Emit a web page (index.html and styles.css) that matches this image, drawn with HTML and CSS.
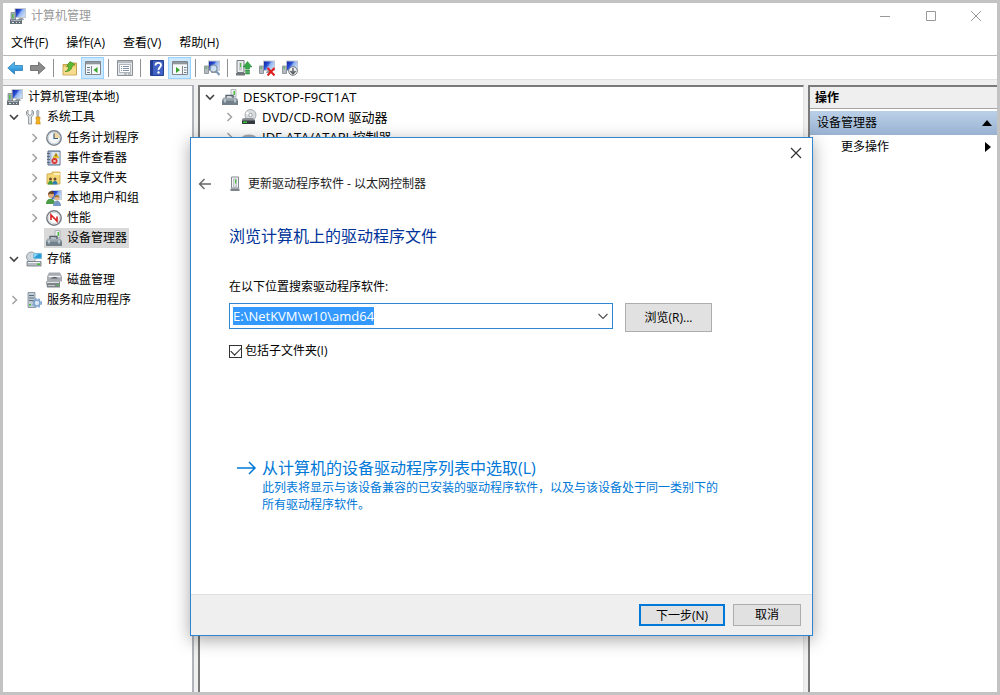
FILE: index.html
```html
<!DOCTYPE html>
<html lang="zh-CN">
<head>
    <meta charset="UTF-8">
    <meta name="viewport" content="width=device-width, initial-scale=1.0">
    <title>计算机管理</title>
    <link rel="stylesheet" href="styles.css">
</head>
<body>
    <!-- icon set -->
    <svg class="sprite" aria-hidden="true">
        <linearGradient id="g-screen" x1="0" y1="0" x2="1" y2="0.6">
            <stop offset="0" stop-color="#0b1fa0"/>
            <stop offset=".45" stop-color="#2f55d8"/>
            <stop offset=".6" stop-color="#8fb2f0"/>
            <stop offset="1" stop-color="#c3d9f8"/>
        </linearGradient>
        <linearGradient id="g-blue" x1="0" y1="0" x2="0" y2="1">
            <stop offset="0" stop-color="#6cc4f2"/>
            <stop offset="1" stop-color="#1583cf"/>
        </linearGradient>
        <symbol id="i-computer" viewBox="0 0 16 16">
            <rect x="4.500" y="0" width="11.500" height="10" fill="#c3c8ce"/>
            <rect x="5.500" y="1" width="9.500" height="8" fill="url(#g-screen)"/>
            <path d="M9 10h4l1 2H8z" fill="#9ba2a9"/>
            <path d="M1 4.500h4.500V12H1z" fill="#a3abb2" stroke="#77818a" stroke-width=".7"/>
            <rect x="2" y="6" width="1.500" height="4" fill="#4fc04a"/>
            <path d="M0 11.500h12V16H0z" fill="#66717a"/>
            <path d="M1 12.500h10" stroke="#aab3ba"/>
            <path d="M2 14.500h2m2 0h1m2 0h1" stroke="#e0e5e8" stroke-width="1.200"/>
        </symbol>
        <symbol id="i-tools" viewBox="0 0 16 16">
            <path d="M2 1v4l2 1.500L6 5V1l1.500 1.500v3L5.500 8v7h-3V8L.5 5.500v-3z" fill="#dfe2e4" stroke="#7f868c" stroke-width=".8"/>
            <path d="M11.500 1l1.500 1-.5 6h-1.500L10.500 2z" fill="#b7bcc0" stroke="#878d92" stroke-width=".5"/>
            <path d="M10 8h4v2l-.5 1 .8 4h-4.500l.7-4-.5-1z" fill="#f2b01e" stroke="#c98a0c" stroke-width=".6"/>
        </symbol>
        <symbol id="i-clock" viewBox="0 0 16 16">
            <circle cx="8" cy="8" r="7.200" fill="#f4f7fa" stroke="#7d868e" stroke-width="1.500"/>
            <path d="M8 8V2a6 6 0 0 1 6 6z" fill="#f4d79a"/>
            <circle cx="8" cy="8" r="5.700" fill="none" stroke="#c5cdd4" stroke-width=".8"/>
            <path d="M8 3.500V8.500h4" fill="none" stroke="#3f5f86" stroke-width="1.200"/>
        </symbol>
        <symbol id="i-event" viewBox="0 0 16 16">
            <path d="M2 1h12v14H2z" fill="#a9bbd3" stroke="#5b6c88"/>
            <path d="M5.500 2h8v12h-8z" fill="#dbe5f2"/>
            <path d="M1 3.500h3m-3 3h3m-3 3h3m-3 3h3" stroke="#5d6a7c"/>
            <path d="M10 3l3 5H7z" fill="#ffd52e" stroke="#b88f00" stroke-width=".5"/>
            <path d="M10 4.500v2" stroke="#222"/>
            <circle cx="8.500" cy="11" r="3" fill="#d8332c"/>
            <path d="M7.300 9.800l2.400 2.400m0-2.400l-2.400 2.400" stroke="#fff" stroke-width=".9"/>
        </symbol>
        <symbol id="i-share" viewBox="0 0 16 16">
            <path d="M1 4l5-.5V2h8v12H1z" fill="#f4d677" stroke="#c9a242" stroke-width=".8"/>
            <path d="M8 3h6v2H8z" fill="#fbeeb9"/>
            <circle cx="4.500" cy="9" r="1.500" fill="#6d4b2a"/>
            <circle cx="9" cy="9" r="1.500" fill="#6d4b2a"/>
            <path d="M2 14.500c0-5 5-5 5 0z" fill="#3f9a3b"/>
            <path d="M6.500 14.500c0-5 5-5 5 0z" fill="#2f7fb5"/>
        </symbol>
        <symbol id="i-users" viewBox="0 0 16 16">
            <rect x="5" y="0" width="11" height="10" fill="#c9cdd2"/>
            <rect x="6" y="1" width="9" height="8" fill="url(#g-screen)"/>
            <circle cx="5" cy="5" r="3" fill="#dba878"/>
            <path d="M2 5c0-5 6-5 6-1-2 0-4-1-6 1z" fill="#6b4423"/>
            <path d="M0 14c0-7 9-7 9 0z" fill="#4a9a48"/>
            <circle cx="11" cy="8" r="2.500" fill="#e2b88c"/>
            <path d="M8.500 8c0-4 5-4 5 0-2-1.500-3-1.500-5 0z" fill="#a6772f"/>
            <path d="M7 16c0-7 8-7 8 0z" fill="#7697c4"/>
        </symbol>
        <symbol id="i-perf" viewBox="0 0 16 16">
            <circle cx="8" cy="8" r="7.200" fill="#fff" stroke="#777d83" stroke-width="1.500"/>
            <circle cx="8" cy="8" r="5.500" fill="none" stroke="#c4c8cc" stroke-width=".8"/>
            <path d="M5 10V5l6 6V6.500" fill="none" stroke="#d81f1f" stroke-width="1.600"/>
        </symbol>
        <symbol id="i-device" viewBox="0 0 16 16">
            <path d="M9 .5h5v7H9z" fill="#e9ecee" stroke="#9aa1a7" stroke-width=".7"/>
            <rect x="11.500" y="2" width="1.500" height="4" fill="#53c03f"/>
            <path d="M1.500 8.500h13L16 11H0z" fill="#9fabb5"/>
            <path d="M4 9V6.500h7V9" fill="none" stroke="#56626c" stroke-width="1.300"/>
            <path d="M0 10.500h16V16H0z" fill="#71808b"/>
            <path d="M0 11h16" stroke="#a9b5be"/>
            <path d="M3 10.500v3m10-3v3" stroke="#e2e7ea" stroke-width="1.200"/>
        </symbol>
        <symbol id="i-storage" viewBox="0 0 16 16">
            <circle cx="5.500" cy="6" r="5" fill="#ccd3d9" stroke="#848d95" stroke-width=".8"/>
            <path d="M7 2h9v6H7z" fill="#2a9bd4" stroke="#e2e7ea" stroke-width=".8"/>
            <path d="M8 3h4L8 7z" fill="#8bd6f4"/>
            <path d="M1 10.500h14V15H1z" fill="#b4bbc1" stroke="#6e777e" stroke-width=".8"/>
            <path d="M2 11.500h12" stroke="#eef1f3"/>
            <rect x="11" y="12.500" width="3" height="1.500" fill="#3fbf3a"/>
        </symbol>
        <symbol id="i-disk" viewBox="0 0 16 16">
            <path d="M3 .5h11l2 4v5H1v-5z" fill="#a5abb0"/>
            <path d="M2.500 4.500h12" stroke="#f0f2f3" stroke-width="1.500"/>
            <path d="M5 6.500c1.500-2 5.500-2 7 0z" fill="#50585f"/>
            <path d="M0 9.500h14v6H1z" fill="#7c848a"/>
            <path d="M1 10.500h12" stroke="#e1e4e6"/>
            <path d="M2 13.500h7" stroke="#c1c7cb"/>
            <rect x="11" y="12.500" width="2" height="1.500" fill="#4cc246"/>
        </symbol>
        <symbol id="i-service" viewBox="0 0 16 16">
            <path d="M2 .5h7v15H2z" fill="#c2ccd4" stroke="#788894" stroke-width=".8"/>
            <path d="M3 3.500h5m-5 2.500h5m-5 2.500h5" stroke="#5b6e7d"/>
            <rect x="3" y="12" width="2" height="1.500" fill="#48ba43"/>
            <circle cx="11" cy="11" r="3" fill="#dce9f5" stroke="#7ba3cd" stroke-width="1.600"/>
            <circle cx="11" cy="11" r="4.400" fill="none" stroke="#7ba3cd" stroke-width="1.200" stroke-dasharray="1.800 1.800"/>
        </symbol>
        <symbol id="i-cdrom" viewBox="0 0 16 16">
            <circle cx="9.500" cy="6" r="5.500" fill="#d9dcdf" stroke="#969ca1" stroke-width=".8"/>
            <path d="M9.500 6L6 2.500 4.500 5z" fill="#fff"/>
            <circle cx="9.500" cy="6" r="1.700" fill="#fff" stroke="#8a9095" stroke-width=".8"/>
            <path d="M1 10l2-1h9l2 2v4H1z" fill="#8a9095"/>
            <path d="M1 11.500h13V15H1z" fill="#343a3f"/>
            <rect x="2" y="12.500" width="4" height="1.500" fill="#39c433"/>
        </symbol>
        <symbol id="i-ide" viewBox="0 0 16 16">
            <ellipse cx="8" cy="10" rx="8" ry="4.500" fill="#a8adb2"/>
        </symbol>
        <symbol id="i-nic" viewBox="0 0 10 16">
            <path d="M1.500 1h7v11h-7z" fill="#f3f4f5" stroke="#858b90"/>
            <path d="M3.500 3h3v8h-3z" fill="#dfe2e4" stroke="#a5abaf" stroke-width=".6"/>
            <rect x="5" y="3.500" width="1.200" height="4" fill="#4fbd3d"/>
            <path d="M.5 12.500h9v2.500h-9z" fill="#7d8489"/>
        </symbol>
        <symbol id="i-back" viewBox="0 0 16 16">
            <path d="M.8 8L7.500 2v3.500h8v5h-8V14z" fill="url(#g-blue)" stroke="#2e7eb5" stroke-width=".8"/>
        </symbol>
        <symbol id="i-forward" viewBox="0 0 16 16">
            <path d="M15.200 8L8.500 2v3.500h-8v5h8V14z" fill="#8c8c8c" stroke="#626262" stroke-width=".8"/>
        </symbol>
        <symbol id="i-folder-up" viewBox="0 0 16 16">
            <path d="M1 4.500h5l1-1.500h7.500v12H1z" fill="#edc766" stroke="#b9923f" stroke-width=".8"/>
            <path d="M1.500 7h12.500v7.500H1.500z" fill="#f6dc8d"/>
            <path d="M3 11.500c2.500-.5 3.500-2 3.500-5H4.500L8 1.500 13 4.500l-2.500.8C10 9.500 7 12 3 11.500z" fill="#5cba35" stroke="#2f8319" stroke-width=".6"/>
        </symbol>
        <symbol id="i-tree-pane" viewBox="0 0 16 16">
            <path d="M.5 1.500h15v13H.5z" fill="#f7f8f9" stroke="#80868b"/>
            <path d="M1 2h14v3H1z" fill="#8f969c"/>
            <path d="M1 4.500h14" stroke="#d8dbdd"/>
            <path d="M6.500 6v8" stroke="#80868b"/>
            <path d="M2 7.500h3m-3 2.500h3m-3 2.500h3" stroke="#687c90"/>
            <path d="M12.500 7v6L8.500 10z" fill="#35a52a"/>
        </symbol>
        <symbol id="i-action-pane" viewBox="0 0 16 16">
            <path d="M.5 1.500h15v13H.5z" fill="#f7f8f9" stroke="#80868b"/>
            <path d="M1 2h14v3H1z" fill="#8f969c"/>
            <path d="M1 4.500h14" stroke="#d8dbdd"/>
            <path d="M10.500 6v8" stroke="#80868b"/>
            <path d="M12 7.500h2.500M12 10h2.500M12 12.500h2.500" stroke="#687c90"/>
            <path d="M4 7v6l4-3z" fill="#35a52a"/>
        </symbol>
        <symbol id="i-props" viewBox="0 0 16 16">
            <path d="M.5.5h15v15H.5z" fill="#e5e8ea" stroke="#8b9196"/>
            <path d="M1 2h14" stroke="#b4babf" stroke-width="2"/>
            <path d="M2.500 4.500h11v8h-11z" fill="#fff" stroke="#a0a6ab" stroke-width=".8"/>
            <path d="M4 6.500h1m1 0h6M4 8.500h1m1 0h6M4 10.500h1m1 0h6" stroke="#8292a3"/>
            <path d="M7 14h3m1 0h3" stroke="#8b9196"/>
        </symbol>
        <symbol id="i-help" viewBox="0 0 16 16">
            <path d="M1.500.5h13v15h-13z" fill="#3f62c4" stroke="#253f92"/>
            <path d="M2 1h2v14H2z" fill="#233d91"/>
            <path d="M6.500 5.500c0-3.500 5.500-3.300 5.500-.2 0 2-2.500 2-2.500 4.700" fill="none" stroke="#fff" stroke-width="1.800"/>
            <circle cx="9.500" cy="12.500" r="1.200" fill="#fff"/>
        </symbol>
        <symbol id="i-pc" viewBox="0 0 16 16">
            <path d="M4 .5h12v10.500H4z" fill="#c3c8ce"/>
            <path d="M5 1.500h10v8.500H5z" fill="url(#g-screen)"/>
            <path d="M8 11h4l1 2H7z" fill="#8f979d"/>
            <path d="M.5 6h4v7.500h-4z" fill="#b3bac0" stroke="#7e868d" stroke-width=".8"/>
            <path d="M1.500 8h1.500" stroke="#45b83f" stroke-width="1.500"/>
        </symbol>
        <symbol id="i-scan" viewBox="0 0 16 16">
            <use href="#i-pc"/>
            <circle cx="9.500" cy="8.500" r="3.500" fill="#d7eaf8" fill-opacity=".8" stroke="#87929b" stroke-width="1.200"/>
            <path d="M12 11l3.500 4" stroke="#7896b5" stroke-width="2"/>
        </symbol>
        <symbol id="i-update" viewBox="0 0 16 16">
            <path d="M1 .5h7v12H1z" fill="#eceeef" stroke="#71787e"/>
            <path d="M3 2.500h3v8H3z" fill="#c5cacd"/>
            <path d="M4.500 3v4" stroke="#4fbd3d"/>
            <path d="M0 13h9v2.500H0z" fill="#6f767b"/>
            <path d="M11.500 1.500L16 7h-2.500v2h-4V7H7zM9.500 10h4v1.500h-4zm0 2.500h4V14h-4z" fill="#37a847" stroke="#1e7b2d" stroke-width=".5"/>
        </symbol>
        <symbol id="i-remove" viewBox="0 0 16 16">
            <use href="#i-pc"/>
            <path d="M8.500 8l7 7.500m0-7.500l-7 7.500" stroke="#e01b1b" stroke-width="2"/>
        </symbol>
        <symbol id="i-disable" viewBox="0 0 16 16">
            <use href="#i-pc"/>
            <circle cx="11" cy="11" r="4.300" fill="#f3f4f5" stroke="#74797e"/>
            <path d="M11 8v5.500M8.500 11l2.500 2.800 2.500-2.800" fill="none" stroke="#5c6166" stroke-width="1.500"/>
        </symbol>
        <symbol id="i-open" viewBox="0 0 14 14">
            <path d="M3 5l4 4 4-4" fill="none" stroke="#404040" stroke-width="1.600"/>
        </symbol>
        <symbol id="i-closed" viewBox="0 0 14 14">
            <path d="M5.500 3l4 4-4 4" fill="none" stroke="#a2a2a2" stroke-width="1.500"/>
        </symbol>
    </svg>

    <div class="window">
        <header class="titlebar">
            <svg class="icon"><use href="#i-computer"/></svg>
            <span class="titlebar-text">计算机管理</span>
            <div class="window-buttons">
                <button type="button" aria-label="最小化"><svg viewBox="0 0 12 12"><path d="M1 6.500h10"/></svg></button>
                <button type="button" aria-label="最大化"><svg viewBox="0 0 12 12"><path d="M1.500 1.500h9v9h-9z"/></svg></button>
                <button type="button" aria-label="关闭"><svg viewBox="0 0 12 12"><path d="M1 1l10 10M11 1L1 11"/></svg></button>
            </div>
        </header>

        <nav class="menubar">
            <button type="button">文件(F)</button>
            <button type="button">操作(A)</button>
            <button type="button">查看(V)</button>
            <button type="button">帮助(H)</button>
        </nav>

        <div class="toolbar">
            <button type="button" aria-label="后退"><svg class="icon"><use href="#i-back"/></svg></button>
            <button type="button" aria-label="前进"><svg class="icon"><use href="#i-forward"/></svg></button>
            <span class="separator"></span>
            <button type="button" aria-label="上一级"><svg class="icon"><use href="#i-folder-up"/></svg></button>
            <button type="button" class="active" aria-label="显示控制台树"><svg class="icon"><use href="#i-tree-pane"/></svg></button>
            <span class="separator"></span>
            <button type="button" aria-label="属性"><svg class="icon"><use href="#i-props"/></svg></button>
            <span class="separator"></span>
            <button type="button" aria-label="帮助"><svg class="icon"><use href="#i-help"/></svg></button>
            <button type="button" class="active" aria-label="显示操作窗格"><svg class="icon"><use href="#i-action-pane"/></svg></button>
            <span class="separator"></span>
            <button type="button" aria-label="扫描硬件改动"><svg class="icon"><use href="#i-scan"/></svg></button>
            <span class="separator"></span>
            <button type="button" aria-label="更新驱动程序"><svg class="icon"><use href="#i-update"/></svg></button>
            <button type="button" aria-label="卸载"><svg class="icon"><use href="#i-remove"/></svg></button>
            <button type="button" aria-label="禁用"><svg class="icon"><use href="#i-disable"/></svg></button>
        </div>

        <main class="panes">
            <section class="pane console-tree">
                <div class="tree-row root"><span class="tree-label"><svg class="icon"><use href="#i-computer"/></svg>计算机管理(本地)</span></div>
                <ul class="tree">
                    <li>
                        <div class="tree-row"><svg class="arrow"><use href="#i-open"/></svg><span class="tree-label"><svg class="icon"><use href="#i-tools"/></svg>系统工具</span></div>
                        <ul>
                            <li class="tree-row"><svg class="arrow"><use href="#i-closed"/></svg><span class="tree-label"><svg class="icon"><use href="#i-clock"/></svg>任务计划程序</span></li>
                            <li class="tree-row"><svg class="arrow"><use href="#i-closed"/></svg><span class="tree-label"><svg class="icon"><use href="#i-event"/></svg>事件查看器</span></li>
                            <li class="tree-row"><svg class="arrow"><use href="#i-closed"/></svg><span class="tree-label"><svg class="icon"><use href="#i-share"/></svg>共享文件夹</span></li>
                            <li class="tree-row"><svg class="arrow"><use href="#i-closed"/></svg><span class="tree-label"><svg class="icon"><use href="#i-users"/></svg>本地用户和组</span></li>
                            <li class="tree-row"><svg class="arrow"><use href="#i-closed"/></svg><span class="tree-label"><svg class="icon"><use href="#i-perf"/></svg>性能</span></li>
                            <li class="tree-row"><svg class="arrow"></svg><span class="tree-label selected"><svg class="icon"><use href="#i-device"/></svg>设备管理器</span></li>
                        </ul>
                    </li>
                    <li>
                        <div class="tree-row"><svg class="arrow"><use href="#i-open"/></svg><span class="tree-label"><svg class="icon"><use href="#i-storage"/></svg>存储</span></div>
                        <ul>
                            <li class="tree-row"><svg class="arrow"></svg><span class="tree-label"><svg class="icon"><use href="#i-disk"/></svg>磁盘管理</span></li>
                        </ul>
                    </li>
                    <li class="tree-row"><svg class="arrow"><use href="#i-closed"/></svg><span class="tree-label"><svg class="icon"><use href="#i-service"/></svg>服务和应用程序</span></li>
                </ul>
            </section>

            <section class="pane device-tree">
                <ul class="tree">
                    <li>
                        <div class="tree-row"><svg class="arrow"><use href="#i-open"/></svg><span class="tree-label"><svg class="icon"><use href="#i-device"/></svg>DESKTOP-F9CT1AT</span></div>
                        <ul>
                            <li class="tree-row"><svg class="arrow"><use href="#i-closed"/></svg><span class="tree-label"><svg class="icon"><use href="#i-cdrom"/></svg>DVD/CD-ROM 驱动器</span></li>
                            <li class="tree-row"><svg class="arrow"><use href="#i-closed"/></svg><span class="tree-label"><svg class="icon"><use href="#i-ide"/></svg>IDE ATA/ATAPI 控制器</span></li>
                        </ul>
                    </li>
                </ul>
            </section>

            <aside class="pane actions">
                <h2 class="actions-title">操作</h2>
                <button type="button" class="actions-group">设备管理器<svg viewBox="0 0 10 10"><path d="M0 8l5-6 5 6z"/></svg></button>
                <button type="button" class="actions-item">更多操作<svg viewBox="0 0 10 10"><path d="M3 0l6 5-6 5z"/></svg></button>
            </aside>
        </main>
    </div>

    <form class="dialog" role="dialog" aria-labelledby="dialog-title">
        <div class="dialog-caption">
            <button type="button" aria-label="关闭"><svg viewBox="0 0 12 12"><path d="M1 1l10 10M11 1L1 11"/></svg></button>
        </div>
        <div class="dialog-title">
            <button type="button" aria-label="返回"><svg viewBox="0 0 14 14"><path d="M13 7H1.500M6.500 2l-5 5 5 5"/></svg></button>
            <svg class="nic"><use href="#i-nic"/></svg>
            <span id="dialog-title">更新驱动程序软件 - 以太网控制器</span>
        </div>
        <div class="dialog-body">
            <h1>浏览计算机上的驱动程序文件</h1>
            <label class="path-label" for="path">在以下位置搜索驱动程序软件:</label>
            <div class="path-row">
                <div class="combo">
                    <input type="text" id="path" value="E:\NetKVM\w10\amd64" spellcheck="false" autocomplete="off">
                    <button type="button" aria-label="展开"><svg viewBox="0 0 12 12"><path d="M1.500 4L6 8.500 10.500 4"/></svg></button>
                </div>
                <button type="button" class="btn browse">浏览(R)...</button>
            </div>
            <div class="check-row">
                <input type="checkbox" id="subfolders" checked>
                <label for="subfolders">包括子文件夹(I)</label>
            </div>
            <a class="pick-link" href="#">
                <svg viewBox="0 0 20 16"><path d="M0 8h18M12 2l6 6-6 6"/></svg>
                <span>
                    <strong>从计算机的设备驱动程序列表中选取(L)</strong>
                    <small>此列表将显示与该设备兼容的已安装的驱动程序软件，以及与该设备处于同一类别下的所有驱动程序软件。</small>
                </span>
            </a>
        </div>
        <div class="dialog-footer">
            <button type="submit" class="btn next">下一步(N)</button>
            <button type="button" class="btn cancel">取消</button>
        </div>
    </form>

    <script>
        // path is preselected so it can be typed over
        const path = document.getElementById('path');
        path.focus();
        path.select();
    </script>
</body>
</html>
```
FILE: styles.css
```css
* {
    box-sizing: border-box;
}
body {
    margin: 0;
    font-family: "Open Sans", "Noto Sans CJK SC", sans-serif;
    font-size: 12px;
    line-height: 20px;
    color: #000;
}
button,
input {
    font: inherit;
    color: inherit;
}
button {
    padding: 0;
    border: 0;
    background: none;
}
ul {
    list-style: none;
    margin: 0;
    padding: 0;
}
.sprite {
    position: absolute;
    width: 0;
    height: 0;
}
.icon {
    width: 16px;
    height: 16px;
    flex: none;
}

/* main window */
.window {
    display: flex;
    flex-direction: column;
    height: 100vh;
    border: 3px solid #c3c3c3;
    background: #efefef;
}
.titlebar {
    display: flex;
    align-items: center;
    height: 26px;
    padding-left: 7px;
    background: #fff;
    color: #999;
}
.titlebar-text {
    margin-left: 5px;
}
.window-buttons {
    display: flex;
    margin-left: auto;
}
.window-buttons button {
    display: flex;
    justify-content: center;
    width: 46px;
}
.window-buttons svg,
.dialog-caption svg {
    width: 12px;
    height: 12px;
    fill: none;
    stroke: #999;
}
.window-buttons button:last-child {
    width: 43px;
}
.menubar {
    display: flex;
    gap: 18px;
    height: 27px;
    padding: 2px 8px 0;
    background: #fff;
    border-bottom: 1px solid #b8b8b8;
}
.toolbar {
    display: flex;
    align-items: center;
    height: 24px;
    padding-top: 1px;
    background: #fff;
    border-bottom: 1px solid #e2e2e2;
}
.toolbar button {
    display: flex;
    align-items: center;
    justify-content: center;
    width: 23px;
    height: 22px;
}
.toolbar .active {
    background: #cce8ff;
    border: 1px solid #99d1ff;
}
.separator {
    width: 1px;
    height: 18px;
    margin: 0 4px;
    background: #8f8f8f;
}

/* panes */
.panes {
    display: flex;
    flex: 1;
    gap: 4px;
    min-height: 0;
    padding-top: 5px;
}
.pane {
    background: #fff;
    overflow: hidden;
}
.console-tree {
    width: 191px;
    border-top: 1px solid #a9adb3;
    border-right: 2px solid #b0b4ba;
    padding-top: 1px;
}
.device-tree {
    flex: 1;
    border-top: 2px solid #7a7a7a;
    border-left: 2px solid #7a7a7a;
    border-right: 1px solid #e2e2e2;
    font-size: 13px;
}
.actions {
    width: 189px;
    border-top: 2px solid #7a7a7a;
    border-left: 2px solid #7a7a7a;
}
.tree {
    padding-left: 4px;
}
.tree ul {
    padding-left: 19px;
}
.console-tree .tree ul {
    padding-top: 1px;
    padding-left: 20px;
}
.console-tree .tree li + li > .tree-row {
    margin-top: 1px;
}
.device-tree .tree {
    padding-left: 3px;
}
.tree-row {
    display: flex;
    gap: 3px;
    align-items: center;
    height: 20px;
    white-space: nowrap;
}
.root {
    padding-left: 2px;
}
.arrow {
    width: 14px;
    height: 14px;
    flex: none;
}
.tree-label {
    display: flex;
    align-items: center;
    gap: 5px;
    padding: 0 2px;
}
.selected {
    background: #d9d9d9;
}
.actions-title {
    margin: 0 0 2px;
    padding: 1px 0 0 5px;
    font-size: 12px;
    line-height: 20px;
    background: #efefef;
    border-bottom: 1px solid #a5a5a5;
}
.actions-group,
.actions-item {
    display: flex;
    align-items: center;
    justify-content: space-between;
    width: 100%;
    height: 24px;
    padding: 0 5px 0 7px;
}
.actions-group {
    background: linear-gradient(#bbd0e8, #99b2d2);
}
.actions-item {
    padding-left: 31px;
}
.actions svg {
    width: 10px;
    height: 10px;
}

/* driver update wizard */
.dialog {
    position: absolute;
    top: 137px;
    right: 187px;
    bottom: 59px;
    left: 190px;
    display: flex;
    flex-direction: column;
    background: #fff;
    border: 1px solid #2f86d0;
    box-shadow: 0 4px 16px rgba(0, 0, 0, 0.35);
}
.dialog-caption {
    display: flex;
    justify-content: flex-end;
    height: 30px;
}
.dialog-caption button {
    display: flex;
    align-items: center;
    justify-content: center;
    width: 32px;
}
.dialog-caption svg {
    stroke: #333;
    stroke-width: 1.2;
}
.dialog-title {
    display: flex;
    align-items: center;
    height: 32px;
    padding-left: 7px;
    color: #222;
}
.dialog-title button {
    display: flex;
}
.dialog-title button svg {
    width: 14px;
    height: 14px;
    fill: none;
    stroke: #666;
    stroke-width: 1.4;
}
.nic {
    width: 10px;
    height: 16px;
    margin: 0 8px 0 18px;
}
.dialog-body {
    display: flex;
    flex-direction: column;
    flex: 1;
    padding: 24px 38px 81px;
}
.dialog h1 {
    margin: 0 0 29px;
    font-size: 16px;
    font-weight: normal;
    line-height: 24px;
    color: #003399;
}
.path-label {
    margin-bottom: 6px;
}
.path-row {
    display: flex;
    align-items: flex-start;
    gap: 12px;
    margin-bottom: 9px;
}
.combo {
    display: flex;
    width: 384px;
    height: 26px;
    border: 1px solid #2f86d0;
}
.combo input {
    flex: 1;
    min-width: 0;
    height: 23px;
    padding: 0 3px;
    border: 0;
    outline: 0;
    font-size: 13px;
}
.combo input::selection {
    background: #3399ff;
    color: #fff;
}
.combo button {
    display: flex;
    align-items: center;
    justify-content: center;
    width: 18px;
}
.combo svg {
    width: 12px;
    height: 12px;
    fill: none;
    stroke: #555;
    stroke-width: 1.2;
}
.btn {
    height: 22px;
    background: #e1e1e1;
    border: 1px solid #adadad;
}
.browse {
    width: 87px;
    height: 29px;
}
.next {
    width: 86px;
    border: 2px solid #0078d7;
}
.cancel {
    width: 68px;
}
.check-row {
    display: flex;
    align-items: center;
    gap: 3px;
}
.check-row input {
    appearance: none;
    width: 13px;
    height: 13px;
    margin: 0;
    border: 1px solid #333;
    background: #fff;
}
/* tick mark */
.check-row input:checked::before {
    content: "";
    display: block;
    width: 9px;
    height: 5px;
    margin: 2px 1px;
    border-left: 1px solid #222;
    border-bottom: 1px solid #222;
    transform: translateY(-1px) rotate(-45deg);
}
.pick-link {
    display: flex;
    gap: 5px;
    margin: auto 0 0 8px;
    color: #0078d7;
    text-decoration: none;
}
.pick-link svg {
    width: 20px;
    height: 16px;
    margin-top: 3px;
    flex: none;
    fill: none;
    stroke: #0078d7;
    stroke-width: 1.5;
}
.pick-link span {
    max-width: 466px;
}
.pick-link strong {
    display: block;
    font-size: 16px;
    font-weight: normal;
    line-height: 22px;
}
.pick-link small {
    display: block;
    font-size: 12px;
    line-height: 17px;
}
.dialog-footer {
    display: flex;
    justify-content: flex-end;
    align-items: center;
    gap: 8px;
    height: 41px;
    padding-right: 11px;
    background: #efefef;
    border-top: 1px solid #dfdfdf;
}
```
